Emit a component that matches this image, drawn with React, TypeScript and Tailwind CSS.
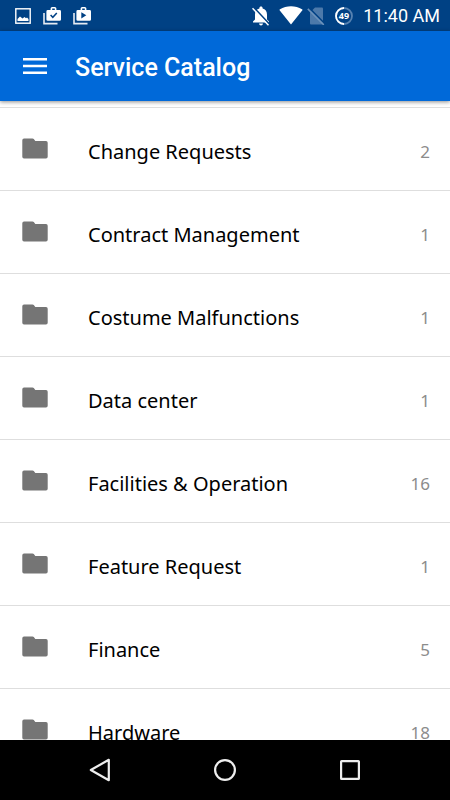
interface Category {
  name: string;
  count: number;
}

const categories: Category[] = [
  { name: "Change Requests", count: 2 },
  { name: "Contract Management", count: 1 },
  { name: "Costume Malfunctions", count: 1 },
  { name: "Data center", count: 1 },
  { name: "Facilities & Operation", count: 16 },
  { name: "Feature Request", count: 1 },
  { name: "Finance", count: 5 },
  { name: "Hardware", count: 18 },
];

function ShopIcon({ variant }: { variant: "check" | "play" }) {
  return (
    <svg className="h-[18px] w-[18px]" viewBox="0 0 18 18" fill="none">
      <path d="M1 6v10.6h13.5" stroke="#e6ebf2" strokeWidth="1.6" />
      <path
        fillRule="evenodd"
        d="M7.6 3V1.6Q7.6 0 9.2 0h2.6q1.6 0 1.6 1.6V3h3.2q1.4 0 1.4 1.4v8q0 1.4-1.4 1.4H4.8q-1.4 0-1.4-1.4v-8Q3.4 3 4.8 3zM9.2 3h2.6V1.6H9.2z"
        fill="#fff"
      />
      {variant === "check" ? (
        <path d="M7.6 8l2.2 2.3 4-4.3" stroke="#004184" strokeWidth="1.5" />
      ) : (
        <path d="M8.3 5.2l5 3.1-5 3.1z" fill="#004184" />
      )}
    </svg>
  );
}

function StatusBar() {
  return (
    <div className="flex h-[31px] shrink-0 items-center justify-between bg-[#004184] pr-[10px] pl-[15px] text-white">
      <div className="flex items-center gap-3">
        <svg className="h-4 w-4" viewBox="0 0 16 16" fill="none">
          <rect x="0.8" y="0.8" width="14.4" height="14.4" stroke="#fff" strokeWidth="1.4" />
          <path d="M2.5 13v-2L5 8.500l2.500 2L9.500 9l1.500 1.200 1-.6 1.500 1.400v2z" fill="#fff" />
        </svg>
        <ShopIcon variant="check" />
        <ShopIcon variant="play" />
      </div>
      <div className="flex items-center">
        <svg className="mr-[9px] h-5 w-[18px]" viewBox="0 0 18 20" fill="none">
          <path
            d="M9 .5c-1 0-1.600.7-1.600 1.500v.6C4.700 3.300 3 5.500 3 8.500v5L1 15.500v1h16v-1l-2-2v-5c0-3-1.700-5.200-4.400-5.900V2C10.600 1.200 10 .5 9 .5z"
            fill="#fff"
          />
          <path d="M7 17.500h4q-.3 2-2 2t-2-2z" fill="#fff" />
          <path d="M1.800 1.500l16 17" stroke="#004184" strokeWidth="1.8" />
          <path d="M.5 2.200l16 17" stroke="#fff" strokeWidth="1.5" />
        </svg>
        <svg className="mr-1 h-[19px] w-6" viewBox="0 0 24 19">
          <path d="M12 18.500L.8 4.600C.3 4 .5 3.700 1 3.300 7.300-.9 16.700-.9 23 3.300c.5.4.7.7.2 1.300z" fill="#fff" />
        </svg>
        <svg className="mr-[10px] h-[18px] w-[18px]" viewBox="0 0 18 18">
          <path d="M8 .5h7q1 0 1 1v15q0 1-1 1H4q-1 0-1-1V5.500z" fill="#4c79aa" />
          <path d="M2 .9l16 16" stroke="#004184" strokeWidth="1.8" />
          <path d="M.8 1.900l16 16" stroke="#6c92bb" strokeWidth="1.5" />
        </svg>
        <svg className="mr-[10px] h-[18px] w-[18px]" viewBox="0 0 18 18" fill="none">
          <circle cx="9" cy="9" r="8" stroke="#5682b1" strokeWidth="1.8" />
          <path d="M9 17A8 8 0 0 1 9 1" stroke="#fff" strokeWidth="1.8" />
          <text
            x="9"
            y="12"
            textAnchor="middle"
            className="fill-white font-['Open_Sans',sans-serif] text-[9px] font-bold"
          >
            49
          </text>
        </svg>
        <span className="font-['Roboto',sans-serif] text-[18px] leading-[31px]">11:40 AM</span>
      </div>
    </div>
  );
}

function AppBar() {
  return (
    <header className="relative flex h-[70px] shrink-0 items-center bg-[#0069d9] pl-[23px] text-white shadow-[0_1px_4px_rgba(0,0,0,0.45)]">
      <button type="button" aria-label="Open menu" className="mr-7">
        <svg className="block h-4 w-6" viewBox="0 0 24 16" fill="none" stroke="#fff" strokeWidth="2.4">
          <path d="M0 1.300h24M0 8h24M0 14.700h24" />
        </svg>
      </button>
      <h1 className="pt-1 font-['Roboto',sans-serif] text-[25px] leading-8 font-medium">Service Catalog</h1>
    </header>
  );
}

function CategoryRow({ name, count }: Category) {
  return (
    <li className="border-b border-[#dedede]">
      <button type="button" className="flex h-[82px] w-full items-center pt-1 pr-5 pl-[22px] text-left">
        <svg className="mr-10 mb-[6px] h-[21px] w-[26px] shrink-0" viewBox="0 0 26 21">
          <path
            d="M2 .5h8.500q.8 0 1.300.6L13.300 3H24q1.700 0 1.700 1.700v14q0 1.700-1.700 1.700H2Q.3 20.400.3 18.700V2.200Q.3.5 2 .5z"
            fill="#757575"
          />
        </svg>
        <span className="flex-1 pt-[2px] text-[20px] leading-7 text-black">{name}</span>
        <span className="pt-[2px] text-[17px] leading-7 text-[#8c8c8c]">{count}</span>
      </button>
    </li>
  );
}

function NavigationBar() {
  return (
    <nav className="flex h-[60px] shrink-0 items-center justify-center gap-[101px] bg-black">
      <button type="button" aria-label="Back">
        <svg className="block h-6 w-6" viewBox="0 0 24 24" fill="none" stroke="#eee" strokeWidth="2.2">
          <path d="M20.800 1.800v20.400L2.800 12z" strokeLinejoin="round" />
        </svg>
      </button>
      <button type="button" aria-label="Home">
        <svg className="block h-6 w-6" viewBox="0 0 24 24" fill="none" stroke="#eee" strokeWidth="2.2">
          <circle cx="12" cy="12" r="9.9" />
        </svg>
      </button>
      <button type="button" aria-label="Recent apps">
        <svg className="block h-6 w-6" viewBox="0 0 24 24" fill="none" stroke="#eee" strokeWidth="2.2">
          <rect x="3.1" y="3.1" width="17.8" height="17.8" rx="0.5" />
        </svg>
      </button>
    </nav>
  );
}

export default function App() {
  return (
    <div className="flex h-screen flex-col bg-white">
      <StatusBar />
      <AppBar />
      <main className="min-h-0 flex-1 overflow-hidden pt-[6px] font-['Noto_Sans',sans-serif]">
        <ul className="border-t border-[#dedede]">
          {categories.map((category) => (
            <CategoryRow key={category.name} {...category} />
          ))}
        </ul>
      </main>
      <NavigationBar />
    </div>
  );
}
